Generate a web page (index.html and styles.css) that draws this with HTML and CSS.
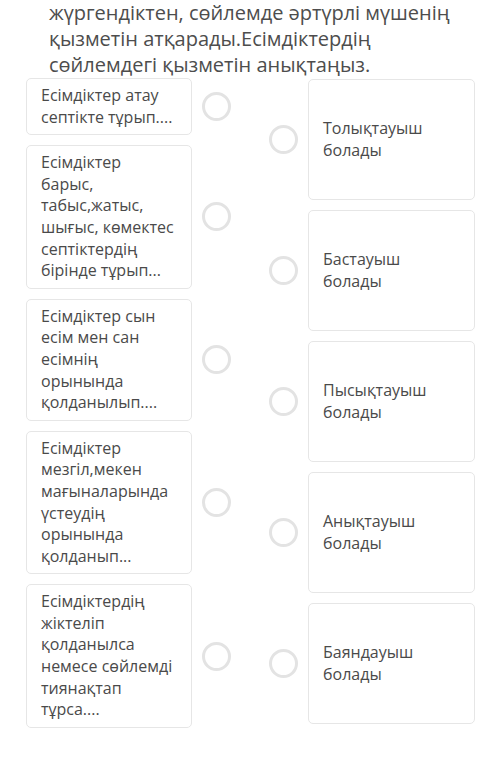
FILE: index.html
```html
<!DOCTYPE html>
<html lang="kk">
<head>
  <meta charset="UTF-8" />
  <meta name="viewport" content="width=device-width, initial-scale=1.0" />
  <title>Сәйкестендіру</title>
  <link rel="stylesheet" href="styles.css">
</head>
<body>
  <p class="question">жүргендіктен, сөйлемде әртүрлі мүшенің<br />қызметін атқарады.Есімдіктердің<br />сөйлемдегі қызметін анықтаңыз.</p>

  <div class="match">
    <div class="col left">
      <div class="row"><div class="card">Есімдіктер атау септікте тұрып....</div><span class="dot"></span></div>
      <div class="row"><div class="card">Есімдіктер барыс, табыс,жатыс, шығыс, көмектес септіктердің бірінде тұрып...</div><span class="dot"></span></div>
      <div class="row"><div class="card">Есімдіктер сын есім мен сан есімнің орынында қолданылып....</div><span class="dot"></span></div>
      <div class="row"><div class="card">Есімдіктер мезгіл,мекен мағыналарында үстеудің орынында қолданып...</div><span class="dot"></span></div>
      <div class="row"><div class="card">Есімдіктердің жіктеліп қолданылса немесе сөйлемді тиянақтап тұрса....</div><span class="dot"></span></div>
    </div>

    <div class="col right">
      <div class="row"><span class="dot"></span><div class="card">Толықтауыш болады</div></div>
      <div class="row"><span class="dot"></span><div class="card">Бастауыш болады</div></div>
      <div class="row"><span class="dot"></span><div class="card">Пысықтауыш болады</div></div>
      <div class="row"><span class="dot"></span><div class="card">Анықтауыш болады</div></div>
      <div class="row"><span class="dot"></span><div class="card">Баяндауыш болады</div></div>
    </div>
  </div>
</body>
</html>
```
FILE: styles.css
```css
body { margin: 0; background: #fff; font-family: "Open Sans", "Noto Sans", sans-serif; color: #4a4a4a; }
.question { margin: 0 0 0 49px; font-size: 20px; line-height: 26px; color: #4d4d4d; }
.match { display: grid; grid-template-columns: 205px 206px; column-gap: 38px; margin: 0 0 0 26px; align-items: start; }
.col { display: flex; flex-direction: column; gap: 10px; }
.right { margin-top: 1px; }
.row { display: flex; align-items: center; gap: 10px; }
.card { flex: 1; background: #fff; border: 1px solid #e6e6e6; border-radius: 5px; font-size: 16px; line-height: 21.6px; }
.left .card { padding: 6px 14px 6px 14px; }
.right .card { height: 121px; box-sizing: border-box; display: flex; align-items: center; padding: 0 14px 0 14px; }
.dot { width: 29px; height: 29px; box-sizing: border-box; border: 3px solid #e3e3e3; border-radius: 50%; flex: none; }
```
